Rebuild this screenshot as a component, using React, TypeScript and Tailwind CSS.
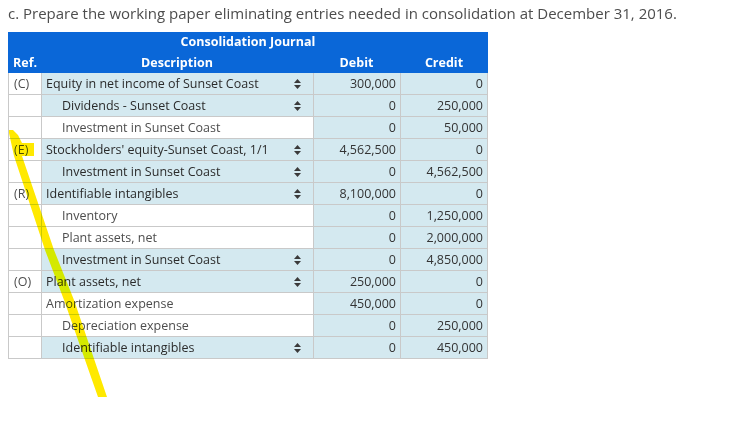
const rows = [
  { ref: "(C)", desc: "Equity in net income of Sunset Coast", indent: false, select: true, debit: "300,000", credit: "0" },
  { ref: "", desc: "Dividends - Sunset Coast", indent: true, select: true, debit: "0", credit: "250,000" },
  { ref: "", desc: "Investment in Sunset Coast", indent: true, select: false, debit: "0", credit: "50,000" },
  { ref: "(E)", desc: "Stockholders' equity-Sunset Coast, 1/1", indent: false, select: true, debit: "4,562,500", credit: "0" },
  { ref: "", desc: "Investment in Sunset Coast", indent: true, select: true, debit: "0", credit: "4,562,500" },
  { ref: "(R)", desc: "Identifiable intangibles", indent: false, select: true, debit: "8,100,000", credit: "0" },
  { ref: "", desc: "Inventory", indent: true, select: false, debit: "0", credit: "1,250,000" },
  { ref: "", desc: "Plant assets, net", indent: true, select: false, debit: "0", credit: "2,000,000" },
  { ref: "", desc: "Investment in Sunset Coast", indent: true, select: true, debit: "0", credit: "4,850,000" },
  { ref: "(O)", desc: "Plant assets, net", indent: false, select: true, debit: "250,000", credit: "0" },
  { ref: "", desc: "Amortization expense", indent: false, select: false, debit: "450,000", credit: "0" },
  { ref: "", desc: "Depreciation expense", indent: true, select: false, debit: "0", credit: "250,000" },
  { ref: "", desc: "Identifiable intangibles", indent: true, select: true, debit: "0", credit: "450,000" },
];

const SortArrows = () => (
  <svg width="7" height="10" viewBox="0 0 7 10" className="shrink-0">
    <path d="M3.5 0 L7 4 L0 4 Z M3.5 10 L7 6 L0 6 Z" fill="#3a3a3a" />
  </svg>
);

export default function App() {
  return (
    <div className="relative w-[730px] h-[439px] overflow-hidden bg-white font-['Open_Sans',sans-serif]">
      <p className="pl-[8px] pt-[3px] h-[32px] text-[15px] leading-[20px] text-[#4d4d4d] whitespace-nowrap">
        c. Prepare the working paper eliminating entries needed in consolidation at December 31, 2016.
      </p>
      <div className="ml-[8px] w-[480px]">
        <div className="bg-[#0a67d8] text-white font-bold text-[12.5px] leading-[20px] h-[41px]">
          <div className="text-center h-[20px]">Consolidation Journal</div>
          <div className="flex h-[21px] items-center">
            <div className="w-[33px] pl-[5px]">Ref.</div>
            <div className="w-[272px] text-center">Description</div>
            <div className="w-[87px] text-center">Debit</div>
            <div className="w-[88px] text-center">Credit</div>
          </div>
        </div>
        {rows.map((row, index) => (
          <div key={index} className="flex h-[22px] text-[12.5px] leading-[21px] text-[#333] border-b border-[#c9c9c9]">
            <div className="w-[34px] pl-[5px] border-l border-r border-[#c9c9c9] text-[#4d4d4d]">{row.ref}</div>
            <div
              className={`w-[271px] flex items-center justify-between pr-[12px] ${row.indent ? "pl-[20px]" : "pl-[4px]"} ${row.select ? "bg-[#d4e9f0] text-[#2b2b2b]" : "bg-white text-[#4d4d4d]"}`}
            >
              <span>{row.desc}</span>
              {row.select && <SortArrows />}
            </div>
            <div className="w-[87px] bg-[#d4e9f0] text-right pr-[4px] border-l border-[#c9c9c9]">{row.debit}</div>
            <div className="w-[88px] bg-[#d4e9f0] text-right pr-[4px] border-l border-r border-[#c9c9c9]">{row.credit}</div>
          </div>
        ))}
      </div>
      <svg width="730" height="439" className="absolute left-0 top-0 mix-blend-darken pointer-events-none">
        <path
          d="M9 130 L13 130 L18 135 L22 143 L34 143 L34 156 L22 156 L54 250 L74 300 L107 397 L98 397 L64 300 L45 250 L14 156 L9 133 Z"
          fill="#ffe900"
        />
      </svg>
    </div>
  );
}
